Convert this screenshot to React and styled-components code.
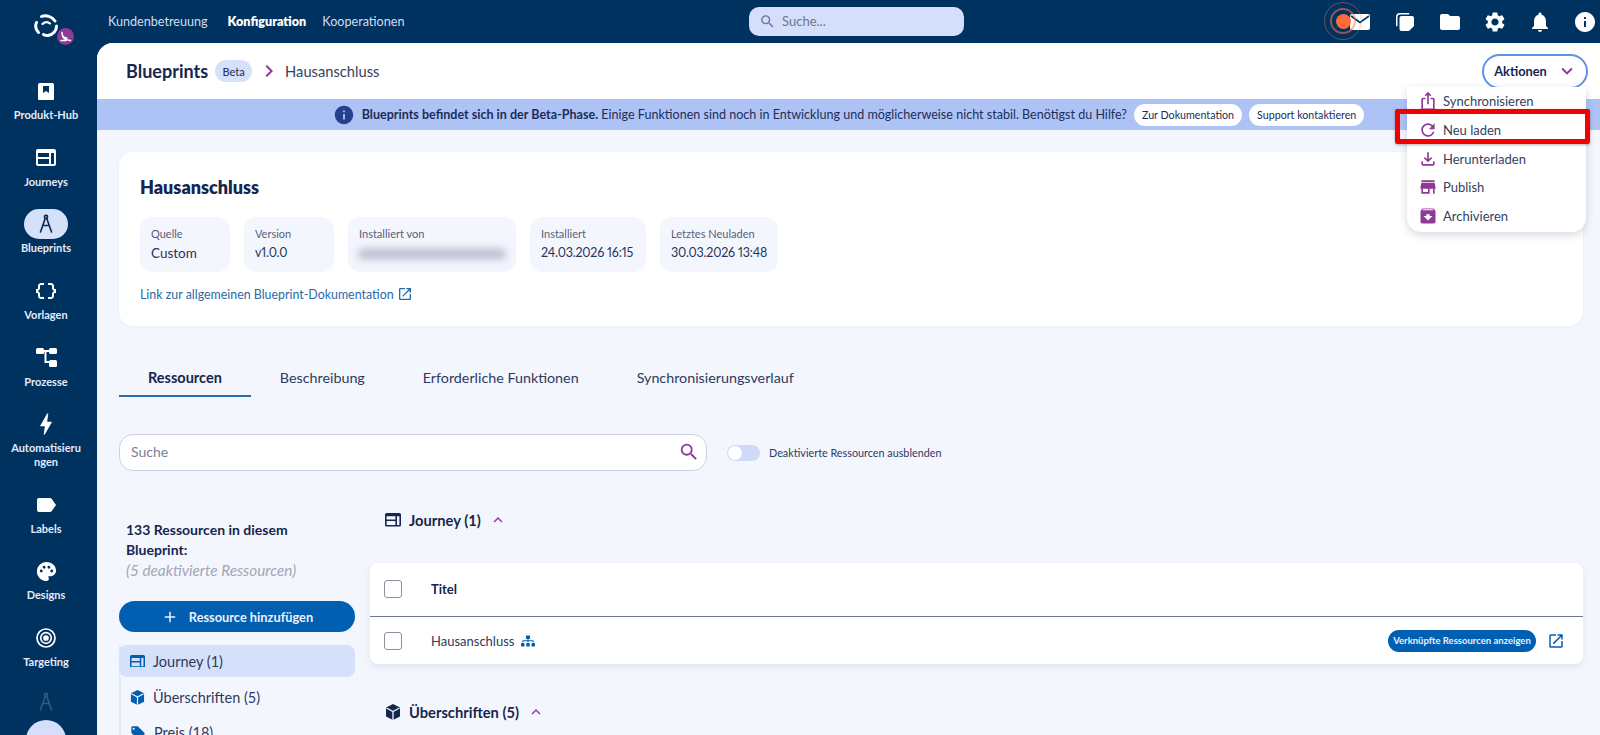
import React from "react";
import styled, { createGlobalStyle } from "styled-components";
import {
  MdSearch, MdFolder, MdSettings, MdNotifications, MdInfo, MdIosShare, MdRefresh, MdOutlineFileDownload,
  MdStore, MdArchive, MdOpenInNew, MdKeyboardArrowDown, MdKeyboardArrowUp, MdChevronRight, MdAdd, MdDataObject,
  MdLabel, MdPalette, MdBolt, MdLocalOffer,
} from "react-icons/md";
import { FaSitemap } from "react-icons/fa";

const Global = createGlobalStyle`
  html, body { margin: 0; padding: 0; height: 100%; overflow: hidden; }
  body { font-family: "Lato", "Open Sans", sans-serif; color: #1a2a52; background: #00325f; }
  * { box-sizing: border-box; }
`;

const Shell = styled.div`
  display: grid;
  grid-template-columns: 97px 1fr;
  width: 1600px;
  height: 735px;
  overflow: hidden;
  background: #00325f;
`;

const Sidebar = styled.aside`
  display: flex;
  flex-direction: column;
  align-items: center;
  overflow: hidden;
  height: 735px;
  padding-right: 5px;
`;
const LogoWrap = styled.div`
  position: relative;
  height: 76px;
  width: 97px;
  flex: none;
  align-self: flex-start;
`;
const LogoBadge = styled.span`
  position: absolute;
  left: 57px;
  top: 28px;
  width: 17px;
  height: 17px;
  border-radius: 50%;
  background: #8e3a96;
  display: flex;
  align-items: center;
  justify-content: center;
`;
const SideItem = styled.div`
  width: 92px;
  flex: none;
  display: flex;
  flex-direction: column;
  align-items: center;
  margin-bottom: 21.2px;
`;
const SideIcon = styled.div`
  width: 44px;
  height: 30px;
  border-radius: 15px;
  display: flex;
  align-items: center;
  justify-content: center;
  color: ${(p) => (p.$active ? "#12264f" : "#fff")};
  background: ${(p) => (p.$active ? "#d5e1fb" : "transparent")};
`;
const SideLabel = styled.div`
  margin-top: 2px;
  font-size: 11px;
  line-height: 13.5px;
  font-weight: 700;
  color: #e4ebfa;
  text-align: center;
  width: 74px;
  word-break: break-all;
`;
const SideFade = styled.div`
  color: #2e5c88;
  height: 20px;
  margin-top: 2px;
  flex: none;
  display: flex;
  align-items: center;
`;
const Avatar = styled.div`
  flex: none;
  width: 40px;
  height: 40px;
  border-radius: 50%;
  margin-top: 8px;
  background: #d5defb;
`;

const Right = styled.div`
  display: flex;
  flex-direction: column;
  min-width: 0;
  height: 735px;
`;
const Top = styled.header`
  height: 43px;
  flex: none;
  display: flex;
  align-items: center;
  padding-left: 11px;
  position: relative;
`;
const TopNav = styled.nav`
  display: flex;
  width: 641px;
  flex: none;
  gap: 16px;
`;
const TopLink = styled.span`
  font-size: 12.6px;
  color: ${(p) => (p.$active ? "#fff" : "#d2dcf0")};
  font-weight: ${(p) => (p.$active ? 800 : 400)};
  margin-right: ${(p) => (p.$first ? "4px" : 0)};
`;
const TopSearch = styled.div`
  width: 215px;
  height: 29px;
  margin-top: -1px;
  border-radius: 10px;
  background: #d5defb;
  display: flex;
  align-items: center;
  gap: 6px;
  padding-left: 10px;
  font-size: 13px;
  color: #6d7596;
`;
const TopIcons = styled.div`
  margin-left: auto;
  display: flex;
  align-items: center;
  gap: 21px;
  padding-right: 3px;
  color: #fff;
`;
const TopIcon = styled.span`
  display: flex;
  width: 24px;
  justify-content: center;
`;
const Pulse = styled.span`
  position: absolute;
  left: 1227px;
  top: 2px;
  width: 38px;
  height: 38px;
  border-radius: 50%;
  border: 1px solid rgba(255, 130, 90, 0.4);
  display: flex;
  align-items: center;
  justify-content: center;
  &::before {
    content: "";
    width: 22px;
    height: 22px;
    border-radius: 50%;
    border: 2px solid rgba(255, 120, 80, 0.55);
    position: absolute;
  }
  &::after {
    content: "";
    width: 15px;
    height: 15px;
    border-radius: 50%;
    background: #ff6a3a;
    position: absolute;
  }
`;

const Panel = styled.main`
  position: relative;
  flex: 1;
  min-height: 0;
  overflow: hidden;
  background: #f4f6fe;
  border-top-left-radius: 16px;
`;
const Header = styled.div`
  height: 56px;
  background: #fff;
  display: flex;
  align-items: center;
  padding: 0 12px 0 29px;
`;
const HeaderTitle = styled.h1`
  margin: 0;
  font-size: 18px;
  font-weight: 700;
  color: #16264f;
`;
const BetaPill = styled.span`
  margin-left: 7px;
  width: 37px;
  height: 22px;
  border-radius: 11px;
  background: #d5e1fb;
  font-size: 11px;
  font-weight: 500;
  color: #2a3658;
  display: flex;
  align-items: center;
  justify-content: center;
`;
const Crumb = styled.span`
  display: flex;
  color: #8e3a96;
  margin: 0 4px 0 5px;
`;
const CrumbText = styled.span`
  font-size: 14.7px;
  color: #33415f;
`;
const Actions = styled.button`
  margin-left: auto;
  width: 106px;
  height: 35px;
  border: 2px solid #5d93e2;
  border-radius: 18px;
  background: #fff;
  font: 700 12.8px "Lato", sans-serif;
  color: #16264f;
  display: flex;
  align-items: center;
  justify-content: center;
  gap: 9px;
  padding: 0 0 0 2px;
  & svg { color: #8e3a96; }
`;
const Banner = styled.div`
  height: 31px;
  background: #adc3f6;
  display: flex;
  align-items: center;
  justify-content: center;
  font-size: 12.55px;
  color: #1d2d57;
  gap: 7px;
`;
const BannerInfo = styled.span`
  display: flex;
  color: #24418d;
`;
const BannerBtn = styled.span`
  height: 22px;
  padding: 0 8px;
  border-radius: 11px;
  background: #fff;
  font-size: 10.7px;
  display: flex;
  align-items: center;
  color: #1d2d57;
`;

const Content = styled.div`
  padding: 22px 17px 0 22px;
`;
const Card = styled.section`
  height: 174px;
  background: #fff;
  border-radius: 14px;
  padding: 24px 21px 0;
  box-shadow: 0 1px 3px rgba(60, 80, 140, 0.06);
`;
const CardTitle = styled.h2`
  margin: 0;
  font-size: 18px;
  line-height: 22px;
  font-weight: 800;
  color: #16264f;
`;
const Facts = styled.div`
  display: flex;
  gap: 14px;
  margin-top: 19px;
`;
const Fact = styled.div`
  height: 55px;
  border-radius: 13px;
  background: #f4f6fe;
  padding: 10px 0 0 11px;
  width: ${(p) => p.$w}px;
`;
const FactKey = styled.div`
  font-size: 11px;
  line-height: 13px;
  color: #555f7c;
`;
const FactVal = styled.div`
  margin-top: 5px;
  font-size: ${(p) => (p.$num ? "12.5px" : "13.5px")};
  line-height: 16px;
  color: #27345a;
  white-space: nowrap;
  font-variant-numeric: proportional-nums;
  letter-spacing: ${(p) => (p.$num ? "-0.2px" : 0)};
`;
const Blurred = styled.div`
  margin-top: 9px;
  width: 146px;
  height: 10px;
  background: #b3b9cb;
  filter: blur(4px);
`;
const DocLink = styled.a`
  display: inline-flex;
  align-items: center;
  gap: 3px;
  margin-top: 14px;
  font-size: 12.4px;
  color: #2b6aa8;
`;
const Tabs = styled.div`
  display: flex;
  margin-top: 34px;
`;
const Tab = styled.div`
  padding: 0 29px;
  height: 37px;
  line-height: 36px;
  font-size: ${(p) => (p.$active ? "14.5px" : "14.3px")};
  font-weight: ${(p) => (p.$active ? 700 : 400)};
  color: ${(p) => (p.$active ? "#16264f" : "#2d3a5e")};
  border-bottom: 2px solid ${(p) => (p.$active ? "#2a6cb0" : "transparent")};
`;
const SearchRow = styled.div`
  display: flex;
  align-items: center;
  margin-top: 37px;
`;
const SearchBox = styled.div`
  width: 588px;
  height: 37px;
  border-radius: 14px;
  border: 1px solid #ccd1e2;
  background: #fff;
  display: flex;
  align-items: center;
  justify-content: space-between;
  padding: 0 6px 2px 11px;
  font-size: 14px;
  color: #7a8093;
  & svg { color: #8e3a96; }
`;
const Toggle = styled.span`
  margin-left: 20px;
  width: 33px;
  height: 16px;
  border-radius: 8px;
  background: #cfdaf8;
  position: relative;
  &::after {
    content: "";
    position: absolute;
    left: 1px;
    top: 1px;
    width: 14px;
    height: 14px;
    border-radius: 50%;
    background: #fff;
  }
`;
const ToggleLabel = styled.span`
  margin-left: 9px;
  font-size: 10.8px;
  color: #2d3a5e;
`;
const Columns = styled.div`
  display: grid;
  grid-template-columns: 236px 1fr;
  column-gap: 15px;
  margin-top: 38px;
`;
const Left = styled.div`
  padding-top: 11px;
`;
const CountText = styled.div`
  padding: 0 40px 0 7px;
  font-size: 14px;
  line-height: 20px;
  font-weight: 700;
  color: #16264f;
  & em {
    display: block;
    font-weight: 400;
    font-size: 15.3px;
    white-space: nowrap;
    color: #a2a6b5;
  }
`;
const AddBtn = styled.div`
  margin-top: 21px;
  height: 31px;
  border-radius: 16px;
  background: #015fb1;
  color: #eaf1fb;
  display: flex;
  align-items: center;
  justify-content: center;
  gap: 10px;
  font-size: 12.8px;
  font-weight: 700;
`;
const ResList = styled.div`
  margin-top: 13px;
  border-left: 2px solid #e3eafb;
`;
const ResRow = styled.div`
  height: ${(p) => (p.$active ? "32px" : "35px")};
  margin: ${(p) => (p.$active ? "0 2px 3px -2px" : "0")};
  width: ${(p) => (p.$active ? "236px" : "auto")};
  padding-left: ${(p) => (p.$active ? "11px" : "9px")};
  border-radius: 8px;
  display: flex;
  align-items: center;
  gap: 8px;
  font-size: 14.5px;
  color: #2d3a5e;
  background: ${(p) => (p.$active ? "#d5e1fb" : "transparent")};
  & svg { color: #015fb1; flex: none; }
`;
const Sections = styled.div`
  min-width: 0;
`;
const GroupHead = styled.div`
  height: 22px;
  display: flex;
  align-items: center;
  gap: 8px;
  padding-left: 15px;
  font-size: 14.7px;
  font-weight: 700;
  color: #16264f;
  margin-top: ${(p) => (p.$top ? `${p.$top}px` : 0)};
  & svg { flex: none; }
`;
const GroupChevron = styled.span`
  display: flex;
  color: #8e3a96;
  margin-left: 0;
`;
const TableCard = styled.div`
  margin-top: 32px;
  background: #fff;
  border-radius: 8px;
  box-shadow: 0 3px 7px rgba(60, 70, 110, 0.1);
`;
const TableRow = styled.div`
  display: flex;
  align-items: center;
  height: ${(p) => (p.$head ? "54px" : "47px")};
  padding: ${(p) => (p.$head ? "0 18px 2px 14px" : "0 18px 0 14px")};
  border-bottom: ${(p) => (p.$head ? "1.5px solid #6b7690" : "none")};
  font-size: 13px;
  font-weight: ${(p) => (p.$head ? 700 : 400)};
  color: ${(p) => (p.$head ? "#16264f" : "#2d3a5e")};
`;
const Check = styled.span`
  width: 18px;
  height: 18px;
  border: 1.5px solid #8f929e;
  border-radius: 3px;
  margin-right: 29px;
  flex: none;
`;
const Sitemap = styled.span`
  display: flex;
  color: #015fb1;
  margin-left: 7px;
`;
const LinkedPill = styled.span`
  margin-left: auto;
  height: 22px;
  width: 148px;
  border-radius: 11px;
  background: #015fb1;
  color: #eaf1fb;
  font-size: 9.5px;
  font-weight: 700;
  display: flex;
  align-items: center;
  justify-content: center;
`;
const ExtIcon = styled.span`
  display: flex;
  color: #015fb1;
  margin-left: 11px;
`;
const Menu = styled.div`
  position: absolute;
  left: 1310px;
  top: 44px;
  width: 179px;
  padding-bottom: 2px;
  background: #fff;
  border-radius: 0 0 14px 14px;
  box-shadow: 0 3px 8px rgba(50, 60, 100, 0.2);
`;
const MenuItem = styled.div`
  height: 28.7px;
  display: flex;
  align-items: center;
  gap: 5px;
  padding-left: 11px;
  font-size: 13px;
  color: #33415f;
  & svg { color: #8e3a96; flex: none; }
`;
const RedBox = styled.div`
  position: absolute;
  left: 1298px;
  top: 66px;
  width: 195px;
  height: 35px;
  border: 5px solid #f40000;
  border-radius: 2px;
  box-shadow: 0 1px 3px rgba(0, 0, 0, 0.3);
`;

const Logo = () => (
  <svg width="26" height="26" viewBox="0 0 26 26" fill="none" stroke="#fff" strokeWidth="3" strokeLinecap="round" style={{ position: "absolute", left: 33, top: 13 }}>
    <path d="M8.500 3.500C13 1.500 19 3.500 22 8" />
    <path d="M23.500 13C23.500 18 20 21.500 15 22.500C13 22.800 11.500 22 10.500 21.500" />
    <path d="M5.500 19.500C3 17 2 13 3.500 9.500" />
    <path d="M17 10.500C15 8.500 11.500 8.500 9.500 11" strokeWidth="2.200" />
  </svg>
);
const BadgeMark = () => (
  <svg width="13" height="12" viewBox="0 0 13 12" fill="none" stroke="#fff" strokeWidth="1.500" strokeLinecap="round"><path d="M3 1.500C3 5 5 7 8 7M3.500 5C5 7.500 6 9 11.500 9.500M2 9.500h5" /></svg>
);
const Bookmark = () => (
  <svg width="18" height="19" viewBox="0 0 18 19"><path fill="#fff" fillRule="evenodd" d="M2 1h14l1 1.500V17a1 1 0 0 1-1 1H2a1 1 0 0 1-1-1V2.500ZM6 4v7l3-2 3 2V4Z" /></svg>
);
const Web = ({ s = 20, c = "currentColor" }) => (
  <svg width={s} height={s * 0.85} viewBox="0 0 20 17" fill={c}><path fillRule="evenodd" d="M2 0h16a2 2 0 0 1 2 2v13a2 2 0 0 1-2 2H2a2 2 0 0 1-2-2V2a2 2 0 0 1 2-2Zm0 4v4h11V4Zm13 0v11h3V4ZM2 10v5h11v-5Z" /></svg>
);
const Flow = () => (
  <svg width="21" height="19" viewBox="0 0 21 19" fill="#fff"><rect x="0" y="0" width="8" height="6" rx="1.500" /><rect x="13" y="0" width="8" height="6" rx="1.500" /><rect x="13" y="12" width="8" height="7" rx="1.500" /><path d="M8 2h5v2h-2.500v9H13v2H8.500V4H8Z" /></svg>
);
const Target = () => (
  <svg width="20" height="20" viewBox="0 0 20 20" fill="none" stroke="#fff" strokeWidth="1.700"><circle cx="10" cy="10" r="9" /><circle cx="10" cy="10" r="5.300" /><circle cx="10" cy="10" r="2" fill="#fff" /></svg>
);
const Compass = () => (
  <svg width="16" height="20" viewBox="0 0 16 20" fill="none" stroke="currentColor" strokeWidth="1.600" strokeLinecap="round"><circle cx="8" cy="3" r="1.600" /><path d="M7.200 4.500 2.500 18M8.800 4.500 13.500 18M4.800 11.500h6.400" /></svg>
);
const Cube = ({ c = "#015fb1", s = 16 }) => (
  <svg width={s} height={s} viewBox="0 0 16 16"><path fill={c} d="M8 0 15 3.500v9L8 16 1 12.500v-9Z" /><path fill="none" stroke="#f4f6fe" strokeWidth="1.300" d="M1.500 4 8 7.500 14.500 4M8 7.500V16" /></svg>
);
const Mail = () => (
  <svg width="20" height="16" viewBox="0 0 20 16"><rect width="20" height="16" rx="2" fill="#fff" /><path d="M1 2l9 6.500L19 2" fill="none" stroke="#00325f" strokeWidth="1.600" /></svg>
);
const Copy = () => (
  <svg width="20" height="20" viewBox="0 0 20 20" fill="#fff"><path d="M5 1h9a1 1 0 0 1 0 1.500H5A2.500 2.500 0 0 0 2.500 5v9a1 1 0 0 1-1.500 0V5a4 4 0 0 1 4-4Z" /><path d="M6.500 4H17a2 2 0 0 1 2 2v8l-5 5H6.500a2 2 0 0 1-2-2V6a2 2 0 0 1 2-2Z" /></svg>
);

const sideItems = [
  ["Produkt-Hub", <Bookmark />],
  ["Journeys", <Web />],
  ["Blueprints", <Compass />, true],
  ["Vorlagen", <MdDataObject size={24} />],
  ["Prozesse", <Flow />],
  ["Automatisierungen", <MdBolt size={28} />],
  ["Labels", <MdLabel size={24} />],
  ["Designs", <MdPalette size={23} />],
  ["Targeting", <Target />],
];

export default function App() {
  return (
    <>
      <Global />
      <Shell>
        <Sidebar>
          <LogoWrap>
            <Logo />
            <LogoBadge><BadgeMark /></LogoBadge>
          </LogoWrap>
          {sideItems.map(([label, icon, active]) => (
            <SideItem key={label}>
              <SideIcon $active={active}>{icon}</SideIcon>
              <SideLabel>{label}</SideLabel>
            </SideItem>
          ))}
          <SideFade><Compass /></SideFade>
          <Avatar />
        </Sidebar>
        <Right>
          <Top>
            <TopNav>
              <TopLink $first>Kundenbetreuung</TopLink>
              <TopLink $active>Konfiguration</TopLink>
              <TopLink>Kooperationen</TopLink>
            </TopNav>
            <TopSearch><MdSearch size={17} />Suche...</TopSearch>
            <TopIcons>
              <TopIcon><Mail /></TopIcon>
              <TopIcon><Copy /></TopIcon>
              <TopIcon><MdFolder size={24} /></TopIcon>
              <TopIcon><MdSettings size={24} /></TopIcon>
              <TopIcon><MdNotifications size={24} /></TopIcon>
              <TopIcon><MdInfo size={24} /></TopIcon>
            </TopIcons>
            <Pulse />
          </Top>
          <Panel>
            <Header>
              <HeaderTitle>Blueprints</HeaderTitle>
              <BetaPill>Beta</BetaPill>
              <Crumb><MdChevronRight size={24} /></Crumb>
              <CrumbText>Hausanschluss</CrumbText>
              <Actions>Aktionen <MdKeyboardArrowDown size={22} /></Actions>
            </Header>
            <Banner>
              <BannerInfo><MdInfo size={22} /></BannerInfo>
              <span><b>Blueprints befindet sich in der Beta-Phase.</b> Einige Funktionen sind noch in Entwicklung und möglicherweise nicht stabil. Benötigst du Hilfe?</span>
              <BannerBtn>Zur Dokumentation</BannerBtn>
              <BannerBtn>Support kontaktieren</BannerBtn>
            </Banner>
            <Content>
              <Card>
                <CardTitle>Hausanschluss</CardTitle>
                <Facts>
                  <Fact $w={90}><FactKey>Quelle</FactKey><FactVal>Custom</FactVal></Fact>
                  <Fact $w={90}><FactKey>Version</FactKey><FactVal $num>v1.0.0</FactVal></Fact>
                  <Fact $w={168}><FactKey>Installiert von</FactKey><Blurred /></Fact>
                  <Fact $w={116}><FactKey>Installiert</FactKey><FactVal $num>24.03.2026 16:15</FactVal></Fact>
                  <Fact $w={118}><FactKey>Letztes Neuladen</FactKey><FactVal $num>30.03.2026 13:48</FactVal></Fact>
                </Facts>
                <DocLink>Link zur allgemeinen Blueprint-Dokumentation <MdOpenInNew size={16} /></DocLink>
              </Card>
              <Tabs>
                <Tab $active>Ressourcen</Tab>
                <Tab>Beschreibung</Tab>
                <Tab>Erforderliche Funktionen</Tab>
                <Tab>Synchronisierungsverlauf</Tab>
              </Tabs>
              <SearchRow>
                <SearchBox>Suche <MdSearch size={22} /></SearchBox>
                <Toggle />
                <ToggleLabel>Deaktivierte Ressourcen ausblenden</ToggleLabel>
              </SearchRow>
              <Columns>
                <Left>
                  <CountText>133 Ressourcen in diesem Blueprint:<em>(5 deaktivierte Ressourcen)</em></CountText>
                  <AddBtn><MdAdd size={18} />Ressource hinzufügen</AddBtn>
                  <ResList>
                    <ResRow $active><Web s={15} />Journey (1)</ResRow>
                    <ResRow><Cube s={15} />Überschriften (5)</ResRow>
                    <ResRow><MdLocalOffer size={16} />Preis (18)</ResRow>
                  </ResList>
                </Left>
                <Sections>
                  <GroupHead><Web s={16} c="#16264f" />Journey (1)<GroupChevron><MdKeyboardArrowUp size={18} /></GroupChevron></GroupHead>
                  <TableCard>
                    <TableRow $head><Check />Titel</TableRow>
                    <TableRow><Check />Hausanschluss<Sitemap><FaSitemap size={14} /></Sitemap><LinkedPill>Verknüpfte Ressourcen anzeigen</LinkedPill><ExtIcon><MdOpenInNew size={18} /></ExtIcon></TableRow>
                  </TableCard>
                  <GroupHead $top={37}><Cube c="#16264f" />Überschriften (5)<GroupChevron><MdKeyboardArrowUp size={18} /></GroupChevron></GroupHead>
                </Sections>
              </Columns>
            </Content>
            <Menu>
              <MenuItem><MdIosShare size={20} />Synchronisieren</MenuItem>
              <MenuItem><MdRefresh size={20} />Neu laden</MenuItem>
              <MenuItem><MdOutlineFileDownload size={20} />Herunterladen</MenuItem>
              <MenuItem><MdStore size={20} />Publish</MenuItem>
              <MenuItem><MdArchive size={20} />Archivieren</MenuItem>
            </Menu>
            <RedBox />
          </Panel>
        </Right>
      </Shell>
    </>
  );
}
